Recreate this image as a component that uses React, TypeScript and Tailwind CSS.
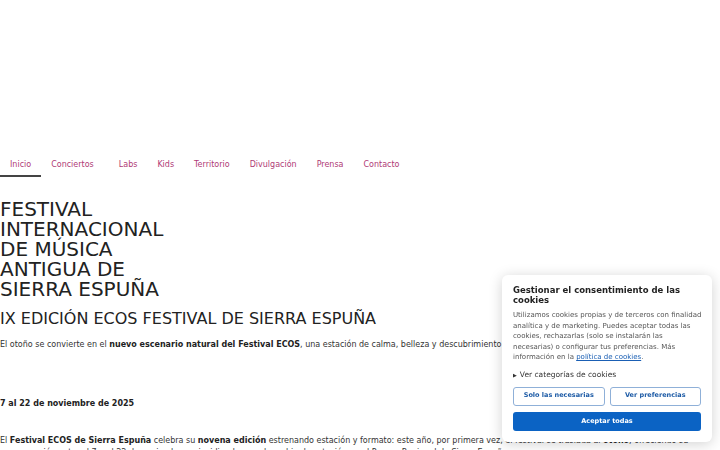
import { useState } from "react";

const navItems = ["Inicio", "Conciertos", "Labs", "Kids", "Territorio", "Divulgación", "Prensa", "Contacto"];

function CookieBanner() {
  const [open, setOpen] = useState(false);

  return (
    <div className="fixed right-[8px] bottom-[8px] w-[210px] bg-white rounded-[6px] shadow-[0_2px_14px_rgba(0,0,0,0.18)] px-[10px] pt-[10px] pb-[11px] text-[#222]">
      <h2 className="font-bold text-[8.5px] leading-[10px] pl-[1px]">Gestionar el consentimiento de las cookies</h2>
      <p className="mt-[5px] text-[7px] leading-[10.5px] text-[#555] pl-[1px]">
        Utilizamos cookies propias y de terceros con finalidad analítica y de marketing. Puedes aceptar todas las cookies,
        rechazarlas (solo se instalarán las necesarias) o configurar tus preferencias. Más información en la{" "}
        <a href="#" className="text-[#1a5fb4] underline">política de cookies</a>.
      </p>
      <button onClick={() => setOpen(!open)} className="mt-[7px] pl-[1px] flex items-center gap-[3px] text-[7.5px] leading-[10px] text-[#333]">
        <span className="text-[5px]">{open ? "▼" : "▶"}</span> Ver categorías de cookies
      </button>
      <div className="mt-[7px] px-[1px] grid grid-cols-2 gap-[5px]">
        <button className="h-[19px] rounded-[3px] border border-[#8fb0d8] text-[6.5px] font-bold text-[#1d5ba6]">Solo las necesarias</button>
        <button className="h-[19px] rounded-[3px] border border-[#8fb0d8] text-[6.5px] font-bold text-[#1d5ba6]">Ver preferencias</button>
      </div>
      <div className="px-[1px]">
        <button className="mt-[6px] w-full h-[19px] rounded-[3px] bg-[#0b63c4] text-[6.5px] font-bold text-white">Aceptar todas</button>
      </div>
    </div>
  );
}

export default function App() {
  return (
    <div className="bg-white text-[#333] font-['DejaVu_Sans',sans-serif] overflow-hidden h-[450px]">
      <header className="h-[155px]" />
      <nav className="flex">
        {navItems.map((item, i) => (
          <a
            key={item}
            href="#"
            className={
              "px-[10px] pt-[5px] pb-[5px] text-[8px] leading-[10px] text-[#b03a76] border-b-2 " +
              (i === 0 ? "border-[#444]" : "border-transparent") +
              (item === "Conciertos" ? " pr-[15px]" : "")
            }
          >
            {item}
          </a>
        ))}
      </nav>
      <main>
        <h1 className="mt-[22px] text-[20px] leading-[20px] text-[#222] w-[180px]">
          FESTIVAL INTERNACIONAL DE MÚSICA ANTIGUA DE SIERRA ESPUÑA
        </h1>
        <h2 className="mt-[10px] text-[16px] leading-[20px] text-[#222]">IX EDICIÓN ECOS FESTIVAL DE SIERRA ESPUÑA</h2>
        <p className="mt-[10px] text-[8px] leading-[12px]">
          El otoño se convierte en el <b className="text-[#222]">nuevo escenario natural del Festival ECOS</b>, una estación de calma, belleza y descubrimiento
        </p>
        <p className="mt-[47px] text-[8px] leading-[12px] font-bold text-[#222]">7 al 22 de noviembre de 2025</p>
        <p className="mt-[25px] text-[8px] leading-[12px] max-w-[700px]">
          El <b className="text-[#222]">Festival ECOS de Sierra Espuña</b> celebra su <b className="text-[#222]">novena edición</b> estrenando estación y formato: este año, por primera vez, el festival se traslada al <b className="text-[#222]">otoño</b>, ofreciendo su
          programación entre el 7 y el 22 de noviembre, coincidiendo con el cambio de estación en el Parque Regional de Sierra Espuña.
        </p>
      </main>
      <CookieBanner />
    </div>
  );
}
